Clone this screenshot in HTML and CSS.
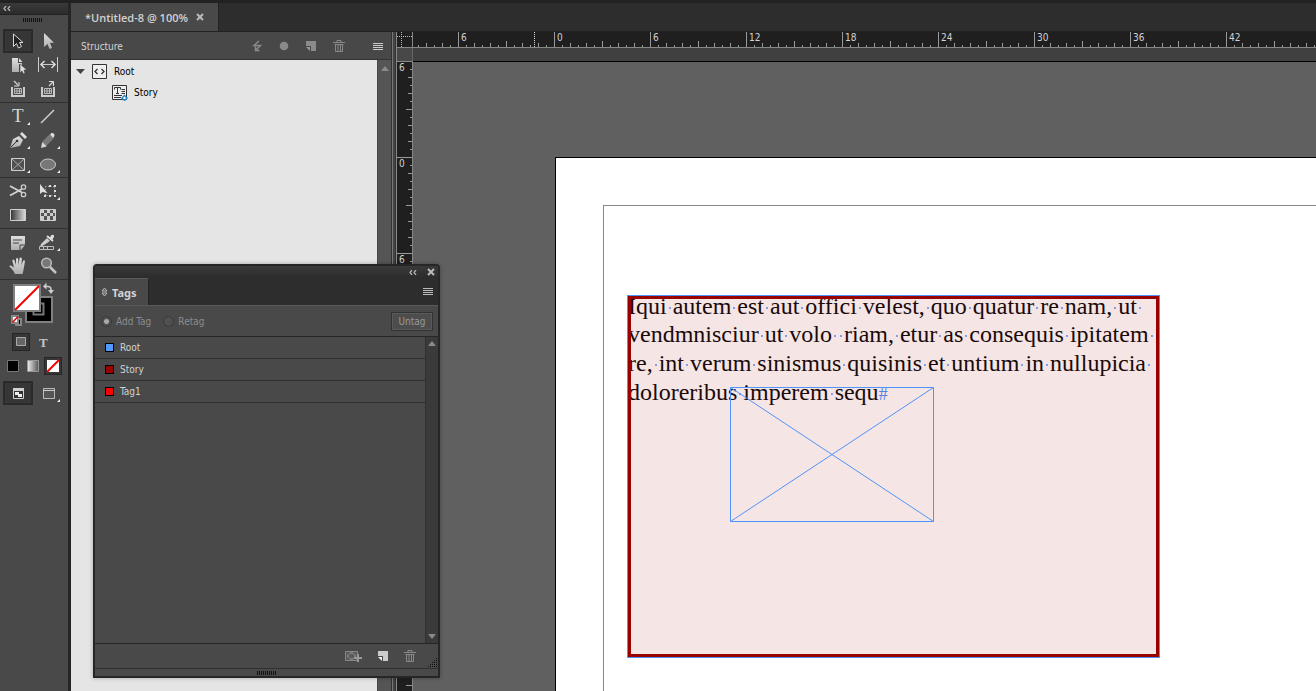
FILE: index.html
```html
<!DOCTYPE html>
<html lang="en">
<head>
<meta charset="utf-8">
<title>Untitled-8</title>
<link rel="stylesheet" href="styles.css">
</head>
<body>
<div class="app">
  <svg class="defs" width="0" height="0" aria-hidden="true">
    <defs>
      <linearGradient id="lite" x1="0" y1="0" x2="0" y2="1"><stop offset="0" stop-color="#dedede"/><stop offset="1" stop-color="#adadad"/></linearGradient>
      <linearGradient id="ramp"><stop offset="0" stop-color="#333"/><stop offset="1" stop-color="#ddd"/></linearGradient>
      <linearGradient id="sheen"><stop offset="0" stop-color="#eee"/><stop offset="1" stop-color="#555"/></linearGradient>
    </defs>
  </svg>

  <aside class="toolbox">
    <header class="tool-head">
      <button class="bare" aria-label="Collapse toolbox"><svg width="8" height="5" viewBox="0 0 8 5"><path d="M3 0L1 2.500l2 2.500M7 0L5 2.500l2 2.500" fill="none" stroke="#b5b5b5" stroke-width="1.300"/></svg></button>
    </header>
    <div class="grip tool-grip"></div>

    <div class="tools">
      <button class="tool on" aria-label="Selection"><svg viewBox="3 29 30 24"><path d="M13.500 34v12.500l3-3 2 4.500 3-1.500-2-4h3.500z" fill="#222" stroke="#d8d8d8"/></svg></button>
      <button class="tool" aria-label="Direct selection"><svg viewBox="33 29 30 24"><path d="M44 33v14l3.500-3 2 5 2.500-1-2-5.200h4z" fill="url(#lite)"/></svg></button>
      <button class="tool" aria-label="Page"><svg viewBox="3 53 30 24"><path d="M12 58h6v5h4v3l-3-2v8h-7z" fill="url(#lite)"/><path d="M19 58l3.500 4H19z" fill="#ddd"/><path d="M20 64v9l2-2 1.500 3 1.500-1-1-3h3z" fill="#ddd" stroke="#333" stroke-width=".5"/></svg></button>
      <button class="tool" aria-label="Gap"><svg viewBox="33 53 30 24"><path d="M38.500 57v15M57.500 57v15M42 64.500h12" stroke="#ccc" fill="none"/><path d="M44.500 61L41 64.500l3.500 3.500M51.500 61l3.500 3.500-3.500 3.500" stroke="#ddd" stroke-width="1.500" fill="none"/></svg></button>
      <button class="tool" aria-label="Content collector"><svg viewBox="3 77 30 24"><path d="M11 87h2v8h10v-8h2v10H11z" fill="#ccc"/><path d="M14.500 88.500h7v5h-7zM14.500 91h7M17 88.500v5M19.500 88.500v5" fill="none" stroke="#bbb"/><path d="M14 81l4 4" stroke="#ccc" stroke-width="1.500"/><path d="M19 82v4h-5" stroke="#ddd" fill="none"/></svg></button>
      <button class="tool" aria-label="Content placer"><svg viewBox="33 77 30 24"><path d="M41 87h2v8h10v-8h2v10H41z" fill="#ccc"/><path d="M44.500 88.500h7v5h-7zM44.500 91h7M47 88.500v5M49.500 88.500v5" fill="none" stroke="#bbb"/><path d="M49 86l4-4" stroke="#ccc" stroke-width="1.500"/><path d="M49 81.500h4.500V86" stroke="#ddd" fill="none"/></svg></button>
    </div>
    <div class="tools">
      <button class="tool" aria-label="Type"><svg viewBox="3 104 30 24"><text x="12" y="122" class="type-t">T</text><path d="M30 122v3h-3z" fill="#eee"/></svg></button>
      <button class="tool" aria-label="Line"><svg viewBox="33 104 30 24"><path d="M41 123l13-13" stroke="#d0d0d0" stroke-width="1.500"/></svg></button>
      <button class="tool" aria-label="Pen"><svg viewBox="3 128 30 24"><path d="M10 148l3-9 6-3 4 4-3 6z" fill="url(#lite)"/><path d="M10.500 147.500l6-6" stroke="#333"/><circle cx="17" cy="141" r="1.300" fill="#333"/><path d="M20 134l2-2 5 5-2 2z" fill="#ddd"/><path d="M30 146v3h-3z" fill="#eee"/></svg></button>
      <button class="tool" aria-label="Pencil"><svg viewBox="33 128 30 24"><path d="M41 148l1-5.500 3 0 1.500 4z" fill="#d5d5d5"/><path d="M42.500 142l7-7 3.500 3.500-7 7z" fill="#777" stroke="#999" stroke-width=".6"/><path d="M50 134.500l1.500-1.500q3-.5 3 3L53 138z" fill="#ddd"/><path d="M60 146v3h-3z" fill="#eee"/></svg></button>
      <button class="tool" aria-label="Rectangle frame"><svg viewBox="3 152 30 24"><path d="M11.500 158.500h13v12h-13z" fill="#505050" stroke="#d0d0d0"/><path d="M12 159l12 11M24 159l-12 11" stroke="#aaa"/><path d="M30 170v3h-3z" fill="#eee"/></svg></button>
      <button class="tool" aria-label="Ellipse"><svg viewBox="33 152 30 24"><ellipse cx="48" cy="164.500" rx="7.500" ry="5.500" fill="#777" stroke="#ccc"/><path d="M60 170v3h-3z" fill="#eee"/></svg></button>
    </div>
    <div class="tools short">
      <button class="tool" aria-label="Scissors"><svg viewBox="3 178 30 24"><path d="M10 186l12 6.500M10 195.500l12-6.500" stroke="#d5d5d5" stroke-width="1.700"/><circle cx="23.500" cy="187" r="2.200" fill="none" stroke="#ccc" stroke-width="1.300"/><circle cx="23.500" cy="194.500" r="2.200" fill="none" stroke="#ccc" stroke-width="1.300"/></svg></button>
      <button class="tool" aria-label="Free transform"><svg viewBox="33 178 30 24"><path d="M45.500 186.500h9v9h-9z" fill="none" stroke="#aaa" stroke-dasharray="1 1.500"/><path d="M54 185h2v2h-2zM54 195h2v2h-2zM44 195h2v2h-2zM49 185h2v2h-2zM49 195h2v2h-2zM54 190h2v2h-2z" fill="#ddd"/><path d="M40 184v10l2.500-2 5 1z" fill="#ddd"/><path d="M60 197v3h-3z" fill="#eee"/></svg></button>
      <button class="tool" aria-label="Gradient swatch"><svg viewBox="3 202 30 24"><path d="M10.500 209.500h15v11h-15z" fill="url(#ramp)" stroke="#d0d0d0"/></svg></button>
      <button class="tool" aria-label="Gradient feather"><svg viewBox="33 202 30 24"><path d="M40.500 209.500h15v11h-15z" fill="#555" stroke="#d0d0d0"/><path d="M41 210h3v3h-3zM47 210h3v3h-3zM53 210h2v3h-2zM44 213h3v3h-3zM50 213h3v3h-3zM41 216h3v4h-3zM47 216h3v4h-3zM53 216h2v4h-2z" fill="#ccc"/></svg></button>
    </div>
    <div class="tools short">
      <button class="tool" aria-label="Note"><svg viewBox="3 230 30 24"><path d="M11 236h14v9l-4 5H11z" fill="url(#lite)"/><path d="M13 240h9M13 243h6" stroke="#444"/><path d="M20 250v-5h5" fill="none" stroke="#444"/></svg></button>
      <button class="tool" aria-label="Eyedropper"><svg viewBox="33 230 30 24"><path d="M41 244l6-6 3 3-6 4-4 2z" fill="#ccc"/><path d="M47 236l6 5" stroke="#ddd" stroke-width="2"/><path d="M49.500 238l2-3q3-1 2.500 2l-2 3z" fill="#ddd"/><path d="M39.500 246.500h14v3h-14zM43.500 247v2M47.500 247v2" fill="none" stroke="#bbb"/><path d="M60 248v3h-3z" fill="#eee"/></svg></button>
      <button class="tool" aria-label="Hand"><svg viewBox="3 254 30 24"><path d="M15 274q-1-3-6-8 1.500-1.500 5 1.500l-1.700-7q1-2 2.200 0l1.500 4.500V259q1.200-1.800 2.200 0l.3 6 1.200-7q1.200-1 2.200.2l-.5 7 1.800-4.700q1.500-.8 1.800.8L23.500 270l-1 4z" fill="url(#lite)"/></svg></button>
      <button class="tool" aria-label="Zoom"><svg viewBox="33 254 30 24"><circle cx="46.500" cy="263" r="4.800" fill="#777" stroke="#bbb" stroke-width="1.500"/><path d="M50 267l6 6" stroke="#c5c5c5" stroke-width="2.500"/></svg></button>
    </div>

    <svg class="proxy" viewBox="0 280 66 50" role="img" aria-label="Fill and stroke">
      <path d="M25 296h28v27H25z" fill="#808080"/><path d="M27 298h24v23H27z" fill="#000"/><path d="M33.500 303.500h10v11h-10z" fill="#000" stroke="#777" stroke-width="2"/>
      <path d="M13 284h28v28H13z" fill="#808080"/><path d="M15 286h24v24H15z" fill="#fff"/><path d="M15 310l24-24" stroke="#f00000" stroke-width="2"/>
      <path d="M45 286.500h3q3 0 3 3v2" fill="none" stroke="#ccc" stroke-width="1.500"/><path d="M43 286.500l3.500-4v7zM48 290h6l-3 4z" fill="#ccc"/>
      <path d="M16 319h5v6h-5z" fill="#000" stroke="#888" stroke-width="2"/><path d="M12 316h6v7h-6z" fill="#fff" stroke="#888" stroke-width="2"/><path d="M12.500 322.500l5.500-6" stroke="#e00000" stroke-width="1.500"/>
    </svg>
    <div class="target">
      <button class="mini on" aria-label="Format container"><svg viewBox="0 0 18 18"><path d="M4.500 4.500h9v8h-9z" fill="#666" stroke="#aaa"/></svg></button>
      <button class="mini" aria-label="Format text"><svg viewBox="0 0 18 18"><text x="4" y="14" class="small-t">T</text></svg></button>
    </div>
    <div class="applies">
      <button class="mini" aria-label="Apply color"><svg viewBox="0 0 18 18"><path d="M3.500 3.500h11v11h-11z" fill="#000" stroke="#777"/></svg></button>
      <button class="mini" aria-label="Apply gradient"><svg viewBox="0 0 18 18"><path d="M3.500 3.500h11v11h-11z" fill="url(#sheen)" stroke="#999"/></svg></button>
      <button class="mini on" aria-label="Apply none"><svg viewBox="0 0 18 18"><path d="M3 3h12v12H3z" fill="#fff"/><path d="M3 15L15 3" stroke="#f00000" stroke-width="2"/></svg></button>
    </div>
    <div class="tools view">
      <button class="tool on" aria-label="Normal view"><svg viewBox="3 381 30 24"><path d="M13.500 388.500h10v10h-10z" fill="#333" stroke="#d0d0d0"/><path d="M13 388h11v3H13z" fill="#d0d0d0"/><path d="M15 392h4v3h-4zM18 394h4v3h-4z" fill="#eee"/></svg></button>
      <button class="tool" aria-label="Preview"><svg viewBox="33 381 30 24"><path d="M43.500 388.500h11v10h-11z" fill="#555" stroke="#bbb"/><path d="M43 390.500h12" stroke="#ccc"/><path d="M60 399v3h-3z" fill="#eee"/></svg></button>
    </div>
  </aside>

  <main class="workspace">
    <nav class="tabs">
      <button class="tab">*Untitled-8 @ 100%</button>
      <button class="tab-x bare" aria-label="Close document"><svg width="8" height="8" viewBox="0 0 8 8"><path d="M1 1l6 6M7 1L1 7" stroke="#bbb" stroke-width="2"/></svg></button>
    </nav>
    <div class="split">
      <section class="structure">
        <header class="structure-head">
          <h2>Structure</h2>
          <div class="structure-tools">
            <button class="bare" aria-label="Validate"><svg width="10" height="12" viewBox="0 0 10 12"><path d="M7 1L2 5.500h6.500L4 10M3.500 6.500v4h4" fill="none" stroke="#8a8a8a" stroke-width="1.500"/></svg></button>
            <button class="bare" aria-label="Attributes"><svg width="10" height="12" viewBox="0 0 10 12"><circle cx="5" cy="6" r="4.300" fill="#8a8a8a"/></svg></button>
            <button class="bare" aria-label="New element"><svg width="10" height="12" viewBox="0 0 10 12"><path d="M0 1h10v10H5V6H0z" fill="#8a8a8a"/><path d="M0 7h4v4z" fill="#999"/></svg></button>
            <button class="bare" aria-label="Delete element"><svg width="12" height="12" viewBox="0 0 12 12"><path d="M0 2.500h12M4 2V.5h4V2M1.500 4.500h9M2.500 4.500v7h7v-7M5 5v6M7.500 5v6" fill="none" stroke="#888"/></svg></button>
            <button class="bare menu" aria-label="Structure menu"><svg width="10" height="9" viewBox="0 0 10 9"><path d="M0 1.500h10M0 3.500h10M0 5.500h10M0 7.500h10" stroke="#ccc"/></svg></button>
          </div>
        </header>
        <div class="structure-body">
          <ul class="tree">
            <li class="node">
              <svg width="9" height="5" viewBox="0 0 9 5"><path d="M0 0h9L4.500 5z" fill="#444"/></svg>
              <svg width="15" height="15" viewBox="0 0 15 15"><path d="M.5.500h14v14H.5z" fill="#eee" stroke="#333"/><path d="M5.500 5L3 7.500 5.500 10M9.500 5L12 7.500 9.500 10" fill="none" stroke="#333" stroke-width="1.300"/></svg>
              <span>Root</span>
            </li>
            <li class="node child">
              <svg width="16" height="16" viewBox="0 0 16 16"><path d="M.5.500h14v14H.5z" fill="#eee" stroke="#333"/><path d="M2.500 4.500v-2h6v2M5.500 3v5M4 8.500h3M9.500 4.500H13M9.500 6.500H13M9.500 8.500H13M2 10.500h8M2 12.500h7" fill="none" stroke="#333"/><path d="M12.500 10.500l2.500 2.500-2.500 2.500L10 13z" fill="#fff" stroke="#1b86c8" stroke-width="1.400"/></svg>
              <span>Story</span>
            </li>
          </ul>
          <div class="scroll"><svg width="8" height="5" viewBox="0 0 8 5"><path d="M0 5h8L4 0z" fill="#8a8a8a"/></svg></div>
        </div>
      </section>
      <div class="splitter"></div>

      <section class="document">
        <div class="corner"><svg width="15" height="15" viewBox="0 0 15 15"><path d="M0 4.500h15M4.500 0v15" stroke="#bbb" stroke-dasharray="1 1"/></svg></div>
        <div class="ruler-x">
          <span class="first">6</span><span>0</span><span>6</span><span>12</span><span>18</span><span>24</span><span>30</span><span>36</span><span>42</span>
          <i class="cursor"></i>
        </div>
        <div class="gutter-y"></div>
        <div class="gutter-x"></div>
        <div class="ruler-y"><span>6</span><span>0</span><span>6</span></div>
        <div class="canvas">
          <div class="page"></div>
          <div class="margins"></div>
          <div class="frame">
            <p>Iqui<i> </i>autem<i> </i>est<i> </i>aut<i> </i>offici<i> </i>velest,<i> </i>quo<i> </i>quatur<i> </i>re<i> </i>nam,<i> </i>ut<i> </i></p>
            <p>vendmnisciur<i> </i>ut<i> </i>volo<i> </i><i> </i>riam,<i> </i>etur<i> </i>as<i> </i>consequis<i> </i>ipitatem<i> </i></p>
            <p>re,<i> </i>int<i> </i>verum<i> </i>sinismus<i> </i>quisinis<i> </i>et<i> </i>untium<i> </i>in<i> </i>nullupicia<i> </i></p>
            <p>doloreribus<i> </i>imperem<i> </i>sequ<b>#</b></p>
          </div>
          <svg class="graphic" width="204" height="135" viewBox="0 0 204 135"><path d="M.5.500h203v134H.5zM.5.500l203 134M203.500.500L.5 134.500" fill="none" stroke="#4f94fb"/></svg>
        </div>
      </section>
    </div>
  </main>

  <section class="panel" aria-label="Tags panel">
    <header class="panel-head">
      <button class="bare" aria-label="Collapse panel"><svg width="8" height="5" viewBox="0 0 8 5"><path d="M3 0L1 2.500l2 2.500M7 0L5 2.500l2 2.500" fill="none" stroke="#b5b5b5" stroke-width="1.300"/></svg></button>
      <button class="bare" aria-label="Close panel"><svg width="8" height="8" viewBox="0 0 8 8"><path d="M1 1l6 6M7 1L1 7" stroke="#bbb" stroke-width="2"/></svg></button>
    </header>
    <div class="panel-tabs">
      <button class="panel-tab"><svg width="7" height="10" viewBox="0 0 7 10"><path d="M1 4l2.500-3L6 4zM1 6l2.500 3L6 6z" fill="none" stroke="#bbb"/></svg>Tags</button>
      <button class="bare menu" aria-label="Panel menu"><svg width="10" height="9" viewBox="0 0 10 9"><path d="M0 1.500h10M0 3.500h10M0 5.500h10M0 7.500h10" stroke="#bbb"/></svg></button>
    </div>
    <form class="options">
      <label><input type="radio" name="mode" checked disabled>Add Tag</label>
      <label><input type="radio" name="mode" disabled>Retag</label>
      <button type="button" class="untag" disabled>Untag</button>
    </form>
    <div class="list">
      <ul>
        <li><i class="swatch blue"></i>Root</li>
        <li><i class="swatch maroon"></i>Story</li>
        <li><i class="swatch red"></i>Tag1</li>
      </ul>
      <div class="list-scroll">
        <svg width="8" height="5" viewBox="0 0 8 5"><path d="M0 5h8L4 0z" fill="#8a8a8a"/></svg>
        <svg width="8" height="5" viewBox="0 0 8 5"><path d="M0 0h8L4 5z" fill="#8a8a8a"/></svg>
      </div>
    </div>
    <footer class="panel-foot">
      <button class="bare" aria-label="Autotag"><svg width="17" height="12" viewBox="0 0 17 12"><path d="M.5 1.500h12v9H.5z" fill="#5a5a5a" stroke="#888"/><path d="M4.500 3.500L2.500 6l2 2.500M8.500 3.500l2 2.500-2 2.500M5 3h3M5 9h3" fill="none" stroke="#999"/><path d="M13 4v8M9 8h8" stroke="#999" stroke-width="2"/></svg></button>
      <button class="bare" aria-label="New tag"><svg width="10" height="12" viewBox="0 0 10 12"><path d="M0 1h10v10H5V6H0z" fill="#ccc"/><path d="M0 7h4v4z" fill="#eee"/></svg></button>
      <button class="bare" aria-label="Delete tag"><svg width="12" height="12" viewBox="0 0 12 12"><path d="M0 2.500h12M4 2V.5h4V2M1.500 4.500h9M2.500 4.500v7h7v-7M5 5v6M7.500 5v6" fill="none" stroke="#888"/></svg></button>
      <svg class="resize" width="10" height="10" viewBox="0 0 10 10"><path d="M8.500 0v10M6.500 2v8M4.500 4v6M2.500 6v4M.5 8v2" stroke="#111" stroke-dasharray="1 1"/></svg>
    </footer>
    <div class="panel-grip"><div class="grip"></div></div>
  </section>
</div>
</body>
</html>
```
FILE: styles.css
```css
* { box-sizing: border-box; }
body {
  margin: 0;
  background: #484848;
  color: #d2d2d2;
  font-family: "DejaVu Sans Condensed", "DejaVu Sans", sans-serif;
  font-size: 10px;
}
button { padding: 0; border: 0; background: none; color: inherit; font: inherit; }
svg { display: block; flex: none; }
ul { margin: 0; padding: 0; list-style: none; }
.defs { position: absolute; }
.bare { display: flex; }

.app {
  position: relative;
  display: flex;
  height: 100vh;
  overflow: hidden;
  border-top: 3px solid #222;
}

/* Toolbox */
.toolbox { width: 71px; flex: none; border-right: 3px solid #262626; background: #494949; }
.tool-head { display: flex; align-items: center; height: 12px; padding-left: 3px; background: linear-gradient(#3a3a3a, #2c2c2c); border-bottom: 1px solid #222; }
.grip { width: 20px; height: 4px; background: repeating-linear-gradient(90deg, #111 0 1px, #494949 1px 2px); }
.tool-grip { margin: 3px auto 7px 23px; }
.tools {
  display: grid;
  grid-template-columns: 30px 30px;
  padding: 1px 0 1px 3px;
  border-bottom: 1px solid #303030;
}
.tool-grip + .tools { padding-top: 0; }
.tools.short { padding-top: 0; padding-bottom: 2px; }
.tools.short + .tools.short { padding: 1px 0 1px 3px; }
.tool { height: 24px; }
.tool svg { width: 30px; height: 24px; }
.on { background: #363636; box-shadow: inset 0 0 0 1px #262626; }
.tool.on { background-clip: content-box; padding: 1px; box-shadow: inset 0 0 0 2px #2a2a2a; }
.tool.on svg { margin: -1px; }
.type-t { font: 19px "Liberation Serif", serif; fill: #d5d5d5; }
.small-t { font: bold 13px "Liberation Serif", serif; fill: #c5c5c5; }
.proxy { width: 66px; height: 50px; }
.target { display: flex; gap: 5px; padding: 3px 12px; }
.applies { display: flex; gap: 2px; padding: 3px 4px 6px; }
.mini { width: 18px; height: 18px; }
.mini svg { width: 18px; height: 18px; }
.tools.view { padding-top: 0; border: 0; }

/* Document tabs */
.workspace { flex: 1; min-width: 0; display: flex; flex-direction: column; }
.tabs { display: flex; align-items: center; height: 29px; flex: none; background: linear-gradient(90deg, #494949 147px, #222 147px 148px, #2d2d2d 148px); border-bottom: 1px solid #222; }
.tab { padding-left: 14px; font: 600 11px "Open Sans", sans-serif; }
.tab-x { margin-left: 8px; }

.split { flex: 1; min-height: 0; display: flex; }
.structure { width: 320px; flex: none; display: flex; flex-direction: column; }
.structure-head { display: flex; justify-content: space-between; align-items: center; height: 28px; padding: 1px 8px 0 10px; border-bottom: 1px solid #333; }
.structure-head h2 { margin: 0; font-size: 10px; font-weight: normal; }
.structure-tools { display: flex; align-items: center; gap: 17px; }
.structure-tools .menu { margin-left: 11px; }
.structure-body { flex: 1; display: flex; }
.tree { flex: 1; padding: 1px 5px; background: #e5e5e5; color: #000; }
.node { display: flex; align-items: center; gap: 7px; height: 21px; }
.node.child { padding-left: 36px; gap: 6px; }
.scroll { width: 14px; padding: 6px 3px; background: #555; border-left: 1px solid #484848; }
.splitter { width: 6px; flex: none; background: linear-gradient(90deg, #333 1px, #777 1px 2px, #444 2px 4px, #333 4px 5px, #888 5px); }

/* Rulers */
.document { flex: 1; min-width: 0; display: grid; grid-template: 16px 14px 1fr / 16px 1fr; }
.corner { background: #1f1f1f; border-right: 1px solid #888; border-bottom: 1px solid #888; }
.ruler-x {
  position: relative;
  display: flex;
  overflow: hidden;
  border-bottom: 1px solid #888;
  background:
    repeating-linear-gradient(90deg, #999 0 1px, transparent 1px 96px) 45px 0 / 100% 15px no-repeat,
    repeating-linear-gradient(90deg, #999 0 1px, transparent 1px 48px) -3px 9px / 110% 6px no-repeat,
    repeating-linear-gradient(90deg, #999 0 1px, transparent 1px 16px) -3px 11px / 110% 4px no-repeat,
    repeating-linear-gradient(90deg, #999 0 1px, transparent 1px 8px) -3px 13px / 110% 2px no-repeat,
    #1f1f1f;
}
.ruler-x span { width: 96px; flex: none; line-height: 12px; padding-left: 3px; }
.ruler-x .first { margin-left: 45px; }
.cursor { position: absolute; left: 121px; top: 0; height: 15px; border-left: 1px dotted #ddd; }
.gutter-y { background: #484848; border-right: 1px solid #666; border-bottom: 1px solid #888; }
.gutter-x { background: #404040; border-bottom: 1px solid #000; }
.ruler-y {
  border-right: 1px solid #888;
  overflow: hidden;
  background:
    repeating-linear-gradient(#999 0 1px, transparent 1px 96px) 0 -1px / 15px 120% no-repeat,
    repeating-linear-gradient(#999 0 1px, transparent 1px 48px) 9px -1px / 6px 120% no-repeat,
    repeating-linear-gradient(#999 0 1px, transparent 1px 16px) 11px -1px / 4px 120% no-repeat,
    repeating-linear-gradient(#999 0 1px, transparent 1px 8px) 13px -1px / 2px 120% no-repeat,
    #1f1f1f;
}
.ruler-y span { display: block; height: 96px; line-height: 12px; padding-left: 2px; }

/* Pasteboard: objects are placed freely */
.canvas { position: relative; overflow: hidden; background: #606060; }
.page { position: absolute; left: 142px; top: 95px; right: 0; bottom: 0; background: #fff; border: solid #000; border-width: 1px 0 0 1px; }
.margins { position: absolute; left: 190px; top: 143px; right: 0; bottom: 0; border: solid #888; border-width: 1px 0 0 1px; }
.frame { position: absolute; left: 214px; top: 233px; width: 533px; height: 363px; background: #f5e5e5; border: 1px solid #4f94fb; }
.frame::after { content: ""; position: absolute; inset: 0; border: 3px solid #900; }
.frame p { margin: 0; color: #1a0a0a; font: 24px/29px "Liberation Serif", serif; white-space: pre; }
.frame p:first-child { line-height: 20px; margin-bottom: 4px; }
.frame i { background: linear-gradient(#7f9fe8, #7f9fe8) 50% 60% / 2px 2px no-repeat; }
.frame b { color: #4f85e0; font-weight: normal; font-size: 18px; }
.graphic { position: absolute; left: 317px; top: 325px; }

/* Floating Tags panel */
.panel { position: absolute; left: 93px; top: 261px; width: 347px; display: flex; flex-direction: column; background: #494949; border: 2px solid #262626; border-radius: 4px 4px 0 0; box-shadow: 0 0 4px rgba(0, 0, 0, .3); }
.panel-head { height: 12px; display: flex; justify-content: flex-end; align-items: center; gap: 10px; padding-right: 3px; background: linear-gradient(#3a3a3a, #2c2c2c); }
.panel-tabs { display: flex; justify-content: space-between; align-items: stretch; height: 27px; background: #2d2d2d; }
.panel-tab { display: flex; align-items: center; gap: 4px; width: 54px; padding-left: 6px; background: #494949; border-top: 1px solid #5a5a5a; border-right: 1px solid #222; font: bold 11px "Noto Sans", sans-serif; }
.panel-tabs .menu { align-items: center; padding-right: 5px; }
.options { display: flex; align-items: center; gap: 12px; height: 32px; padding: 0 5px 0 6px; border-bottom: 1px solid #262626; border-top: 1px solid #5a5a5a; color: #8c8c8c; }
.options label { display: flex; align-items: center; gap: 4px; }
.options input { appearance: none; width: 11px; height: 11px; margin: 0; border: 1px solid #383838; border-radius: 50%; background: #505050; }
.options input:checked { background: radial-gradient(#aaa 0 2px, #505050 3px); }
.untag { margin-left: auto; width: 42px; height: 19px; border: 1px solid #333; box-shadow: inset 0 0 0 1px #5a5a5a; background: #4d4d4d; color: #999; }
.list { display: flex; height: 306px; }
.list ul { flex: 1; }
.list li { display: flex; align-items: center; gap: 6px; height: 22px; padding-left: 10px; border-bottom: 1px solid #303030; }
.swatch { width: 9px; height: 9px; border: 1px solid #000; }
.blue { background: #4f99ff; }
.maroon { background: #900; }
.red { background: #f00; }
.list-scroll { width: 13px; display: flex; flex-direction: column; justify-content: space-between; align-items: center; padding: 4px 0; background: #3a3a3a; border-left: 1px solid #303030; }
.panel-foot { display: flex; justify-content: flex-end; align-items: center; gap: 16px; height: 25px; border-top: 1px solid #262626; }
.resize { align-self: flex-end; margin-left: -4px; }
.panel-grip { display: flex; justify-content: center; align-items: center; height: 8px; border-top: 1px solid #303030; }
```
